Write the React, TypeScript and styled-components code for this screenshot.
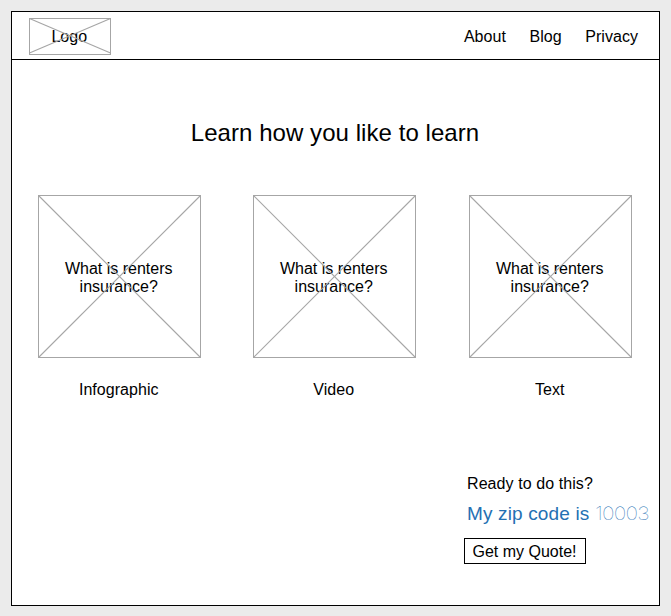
import React from "react";
import styled, { createGlobalStyle } from "styled-components";

const GlobalStyle = createGlobalStyle`
  * { box-sizing: border-box; }
  body {
    margin: 0;
    background: #ebebeb;
    color: #000;
    font: 16px/18px "Liberation Sans", Arial, sans-serif;
  }
`;

const Page = styled.div`
  width: 671px;
  height: 616px;
  padding: 11px;
`;

const Frame = styled.div`
  width: 649px;
  height: 595px;
  border: 1px solid #000;
  background: #fff;
`;

const Header = styled.header`
  display: flex;
  align-items: flex-start;
  justify-content: space-between;
  height: 48px;
  padding: 6px 21px 0 17px;
  border-bottom: 1px solid #000;
`;

const Nav = styled.nav`
  display: flex;
  gap: 23.5px;
  padding-top: 10px;
  letter-spacing: 0.05px;
`;

const NavLink = styled.a`
  color: inherit;
  text-decoration: none;
`;

const Placeholder = styled.div<{ $width: number; $height: number }>`
  position: relative;
  display: flex;
  align-items: center;
  justify-content: center;
  width: ${(p) => p.$width}px;
  height: ${(p) => p.$height}px;
  padding-right: 1.5px;
  border: 1px solid #a6a6a6;
  text-align: center;
`;

const Cross = styled.svg`
  position: absolute;
  inset: -1px;
`;

const Title = styled.h1`
  margin: 59px 0 0;
  padding-right: 1px;
  font-size: 24px;
  line-height: 28px;
  font-weight: 400;
  letter-spacing: 0.06px;
  text-align: center;
`;

const Cards = styled.main`
  display: grid;
  grid-template-columns: 215px 216px 163px;
  padding: 48px 0 0 26px;
`;

const Card = styled.section`
  display: flex;
  flex-direction: column;
  gap: 23px;
  width: 163px;
`;

const CardText = styled.span`
  width: 120px;
  padding-top: 2px;
`;

const CardLabel = styled.span`
  padding-right: 1.5px;
  letter-spacing: 0.05px;
  text-align: center;
`;

const Quote = styled.section`
  display: flex;
  flex-direction: column;
  align-items: flex-start;
  margin: 76px 0 0 452px;
`;

const Ready = styled.p`
  margin: 0 0 0 3px;
  letter-spacing: 0.08px;
`;

const Zip = styled.p`
  margin: 9px 0 0 3px;
  color: #2470b3;
  font-size: 19px;
  line-height: 24px;
  letter-spacing: 0.15px;
  white-space: nowrap;
`;

const ZipCode = styled.span`
  display: inline-block;
  font-family: Inter, sans-serif;
  font-size: 18px;
  font-weight: 100;
  letter-spacing: -0.7px;
  transform: scaleX(1.18);
  transform-origin: left;
`;

const QuoteButton = styled.button`
  width: 122px;
  height: 26px;
  margin-top: 12px;
  padding: 2px 1px 0 0;
  border: 1px solid #000;
  background: #fff;
  color: #000;
  font: inherit;
`;

type BoxProps = {
  width: number;
  height: number;
  drop?: number;
  children: React.ReactNode;
};

function CrossedBox({ width, height, drop = 0, children }: BoxProps) {
  const bottom = height - 0.5 - drop;
  return (
    <Placeholder $width={width} $height={height}>
      {children}
      <Cross width={width} height={height} stroke="#a6a6a6" strokeWidth="1.1">
        <line x1="0.5" y1="0.5" x2={width - 0.5} y2={bottom} />
        <line x1={width - 0.5} y1="0.5" x2="0.5" y2={bottom} />
      </Cross>
    </Placeholder>
  );
}

const topics = ["Infographic", "Video", "Text"];

export default function App() {
  return (
    <>
      <GlobalStyle />
      <Page>
        <Frame>
          <Header>
            <CrossedBox width={82} height={37} drop={1.5}>
              Logo
            </CrossedBox>
            <Nav>
              <NavLink>About</NavLink>
              <NavLink>Blog</NavLink>
              <NavLink>Privacy</NavLink>
            </Nav>
          </Header>
          <Title>Learn how you like to learn</Title>
          <Cards>
            {topics.map((topic) => (
              <Card key={topic}>
                <CrossedBox width={163} height={163}>
                  <CardText>What is renters insurance?</CardText>
                </CrossedBox>
                <CardLabel>{topic}</CardLabel>
              </Card>
            ))}
          </Cards>
          <Quote>
            <Ready>Ready to do this?</Ready>
            <Zip>
              My zip code is <ZipCode>10003</ZipCode>
            </Zip>
            <QuoteButton>Get my Quote!</QuoteButton>
          </Quote>
        </Frame>
      </Page>
    </>
  );
}
